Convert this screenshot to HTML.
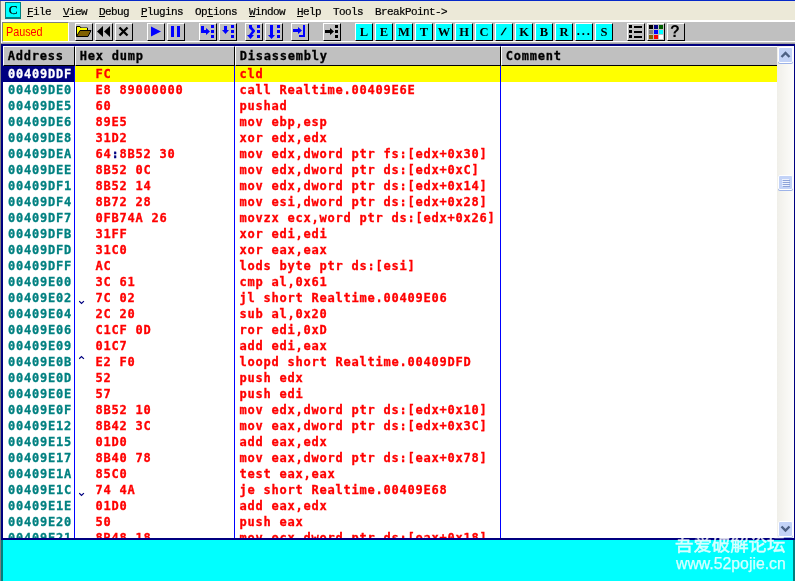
<!DOCTYPE html>
<html lang="en"><head><meta charset="utf-8"><title>OllyDbg</title>
<style>
html,body{margin:0;padding:0}
body{width:795px;height:581px;overflow:hidden;position:relative;background:#c0c0c0;font-family:"DejaVu Sans Mono","Liberation Mono",monospace}
body>*{position:absolute;will-change:transform}
#frameL{left:0;top:0;width:1px;height:581px;background:#808080;z-index:50}
#topline{left:0;top:0;width:795px;height:1px;background:#0628c8;z-index:51}
#menubar{left:1px;top:1px;width:794px;height:19px;background:#ece9d8}
#menubar .ic{-webkit-text-stroke:.25px #000;position:absolute;left:4px;top:1px;width:14px;height:14px;border:1px solid #008080;border-bottom-width:2px;background:#00ffff;font-family:"Liberation Serif",serif;font-size:13px;line-height:14px;text-align:center;color:#000}
#menubar .mi{position:absolute;top:4px;height:14px;font-family:"Liberation Mono",monospace;font-size:11px;line-height:14px;letter-spacing:-.6px;color:#000;white-space:pre;-webkit-text-stroke:.2px #000}
#menubar .mi u{text-decoration:none;position:relative}
#menubar .mi u::after{content:"";position:absolute;left:0;width:6px;top:10px;height:1px;background:#000}
#tbwhite{left:1px;top:20px;width:794px;height:2px;background:#fff}
#tbwl{left:1px;top:22px;width:1px;height:21px;background:#fff}
#tbbot{left:1px;top:41px;width:794px;height:1px;background:#fff}
#tbbot2{left:1px;top:43px;width:794px;height:1px;background:#a0a0a0}
#status{left:2px;top:22px;width:65px;height:18px;border-top:1px solid #808080;border-left:1px solid #808080;border-right:1px solid #fff;border-bottom:1px solid #fff;background:#ffff00;color:#ff0000;font-family:"Liberation Sans",sans-serif;font-size:12px;line-height:18px}
#status span{position:absolute;left:3px;top:0;transform:scaleX(.9);transform-origin:0 0}
.b{top:23px;width:16px;height:16px;border-top:1px solid #fff;border-left:1px solid #fff;border-right:1px solid #000;border-bottom:1px solid #000;background:#c0c0c0}
.b svg{position:absolute;left:0;top:0}
.b.c{background:#00ffff;font-family:"Liberation Serif",serif;font-weight:bold;font-size:12.5px;line-height:16px;text-align:center;color:#000}
.b .dots{position:relative;top:-1.5px;left:.2px;font-size:12.5px;letter-spacing:1.9px}
.b .sl{display:inline-block;font-family:"Liberation Sans",sans-serif;font-size:10px;position:relative;top:-.8px;left:-1px;transform:skewX(-22deg) scaleX(1.25)}
.b .q{position:absolute;left:-1px;top:0;width:16px;text-align:center;font-family:"Liberation Sans",sans-serif;font-weight:bold;font-size:16px;line-height:16px}
#cpu{left:1px;top:44px;width:794px;height:496px;background:#000080}
.hdr{top:46px;height:20px;background:#c0c0c0;border-top:1px solid #fff;border-left:1px solid #fff;border-bottom:1px solid #000;border-right:1px solid #000;box-sizing:border-box;font-size:12px;letter-spacing:.776px;font-weight:bold;line-height:16px;color:#000}
.hdr span{position:absolute;left:3.7px;top:1.4px;white-space:pre;-webkit-text-stroke:.3px #000}
.hdr.last{border-right:0}
#rows{left:3px;top:66px;width:774px;height:472px;background:#fff;overflow:hidden}
.row{position:absolute;left:0;width:774px;height:16px;font-size:12px;letter-spacing:.776px;font-weight:bold;line-height:16px;color:#ff0000;white-space:pre}
.row.sel{background:#ffff00}
.row span{position:absolute;top:0;-webkit-text-stroke:.3px currentColor}
.row .a{left:0;width:71px;color:#008080;padding-left:5px;box-sizing:border-box}
.row.sel .a{background:#000080;color:#fff}
.row .mk{position:absolute;left:76px;top:0}
.row .h{left:92.5px}
.row .h i{font-style:normal;color:#000080}
.row .d{left:236.5px}
.vl{top:66px;width:1px;height:472px;background:#0000ff}
#sb{left:777px;top:46px;width:16.5px;height:492px;background:linear-gradient(90deg,#f0efe9,#fdfdfb)}
#sb>*{position:absolute}
.sbb{left:1px;width:15px;height:16px;background:#c3d3f7;border-radius:2px;box-sizing:border-box;border:1px solid #fff;box-shadow:0 1px 0 #9db3e8}
.sbb svg{position:absolute;left:0;top:0}
#bottom{left:1px;top:540px;width:794px;height:41px;background:#00ffff}
#botL{left:1px;top:540px;width:2px;height:41px;background:#008080}
#botR{left:793px;top:540px;width:2px;height:41px;background:#008080}
#wm1{left:674.5px;top:533.5px;width:114px;height:22px;color:#fff;opacity:.85;-webkit-text-stroke:.5px #fff;font-family:"Liberation Sans","Noto Sans CJK SC",sans-serif;font-size:18.4px;line-height:22px;white-space:pre;z-index:60}
#wm2{left:675.5px;top:552.600px;width:114px;height:22px;color:#fff;opacity:.85;-webkit-text-stroke:.25px #fff;font-family:"Liberation Sans","Noto Sans CJK SC",sans-serif;font-size:15.8px;line-height:22px;white-space:pre;z-index:60}
</style></head>
<body>
<div id="frameL"></div><div id="topline"></div>
<div id="menubar"><div class="ic">C</div><div class="mi" style="left:26px"><u>F</u>ile</div><div class="mi" style="left:62px"><u>V</u>iew</div><div class="mi" style="left:98px"><u>D</u>ebug</div><div class="mi" style="left:140px"><u>P</u>lugins</div><div class="mi" style="left:194px">Op<u>t</u>ions</div><div class="mi" style="left:248px"><u>W</u>indow</div><div class="mi" style="left:296px"><u>H</u>elp</div><div class="mi" style="left:332px">Tools</div><div class="mi" style="left:374px">BreakPoint-&gt;</div></div>
<div id="tbwhite"></div><div id="tbwl"></div><div id="tbbot"></div><div id="tbbot2"></div>
<div id="status"><span>Paused</span></div>
<div class="b" style="left:75px"><svg width="16" height="16" viewBox="0 0 16 16"><path d="M0.5 12.5V2.500H4L5 4H11.500V7" fill="#ffff00" stroke="#000"/><path d="M1 4h10v3H1z" fill="#ffff00"/><path d="M1 3h3v2H1z" fill="#ffff00"/><path d="M4 6.500H15L12 12.500H0.500Z" fill="#806000" stroke="#000" stroke-linejoin="miter"/></svg></div>
<div class="b" style="left:95px"><svg width="16" height="16" viewBox="0 0 16 16"><path d="M7 2v11L1 7.500zM14 2v11L8 7.500z" fill="#000"/></svg></div>
<div class="b" style="left:115px"><svg width="16" height="16" viewBox="0 0 16 16"><path d="M3.500 3.500L11.500 11.500M11.500 3.500L3.500 11.500" stroke="#000" stroke-width="2.300" stroke-linecap="butt"/></svg></div>
<div class="b" style="left:147px"><svg width="16" height="16" viewBox="0 0 16 16"><path d="M3 2.500v10l10-5z" fill="#0000ff"/></svg></div>
<div class="b" style="left:167px"><svg width="16" height="16" viewBox="0 0 16 16"><rect x="3" y="2" width="3" height="11" fill="#0000ff"/><rect x="9" y="2" width="3" height="11" fill="#0000ff"/></svg></div>
<div class="b" style="left:199px"><svg width="16" height="16" viewBox="0 0 16 16"><path d="M1 2h3v4h2V4l4 3.500L6 11V9H1z" fill="#0000ff"/><rect x="11" y="1" width="3" height="3" fill="#0000ff"/><rect x="11" y="6" width="3" height="3" fill="#0000ff"/><rect x="11" y="11" width="3" height="3" fill="#0000ff"/></svg></div>
<div class="b" style="left:219px"><svg width="16" height="16" viewBox="0 0 16 16"><path d="M4 2h3v4h2L5.500 10 2 6h2z" fill="#0000ff"/><rect x="11" y="1" width="3" height="3" fill="#0000ff"/><rect x="11" y="6" width="3" height="3" fill="#0000ff"/><rect x="11" y="11" width="3" height="3" fill="#0000ff"/></svg></div>
<div class="b" style="left:245px"><svg width="16" height="16" viewBox="0 0 16 16"><path d="M3 1H6V3L9 6.500V7.500L6 11H8L4.500 15L1 11H3L6 7L3 4Z" fill="#0000ff"/><rect x="11" y="1" width="3" height="3" fill="#0000ff"/><rect x="11" y="6" width="3" height="3" fill="#0000ff"/><rect x="11" y="11" width="3" height="3" fill="#0000ff"/></svg></div>
<div class="b" style="left:265px"><svg width="16" height="16" viewBox="0 0 16 16"><path d="M4 1h3v10h2L5.500 15 2 11h2z" fill="#0000ff"/><rect x="11" y="1" width="3" height="3" fill="#0000ff"/><rect x="11" y="6" width="3" height="3" fill="#0000ff"/><rect x="11" y="11" width="3" height="3" fill="#0000ff"/></svg></div>
<div class="b" style="left:291px"><svg width="16" height="16" viewBox="0 0 16 16"><path d="M1 5h5V3l4 3.500L6 10V8H1z" fill="#0000ff"/><path d="M11 1h2v12H7v-2h4z" fill="#0000ff"/></svg></div>
<div class="b" style="left:323px"><svg width="16" height="16" viewBox="0 0 16 16"><path d="M1 6h5V4l4 3.500L6 11V9H1z" fill="#000"/><rect x="11" y="1" width="3" height="3" fill="#000"/><rect x="11" y="6" width="3" height="3" fill="#000"/><rect x="11" y="11" width="3" height="3" fill="#000"/></svg></div>
<div class="b c" style="left:355px">L</div>
<div class="b c" style="left:375px">E</div>
<div class="b c" style="left:395px">M</div>
<div class="b c" style="left:415px">T</div>
<div class="b c" style="left:435px">W</div>
<div class="b c" style="left:455px">H</div>
<div class="b c" style="left:475px">C</div>
<div class="b c" style="left:495px"><span class="sl">/</span></div>
<div class="b c" style="left:515px">K</div>
<div class="b c" style="left:535px">B</div>
<div class="b c" style="left:555px">R</div>
<div class="b c" style="left:575px"><span class="dots">...</span></div>
<div class="b c" style="left:595px">S</div>
<div class="b" style="left:627px"><svg width="16" height="16" viewBox="0 0 16 16"><rect x="1" y="1" width="3" height="3"/><rect x="6" y="2" width="8" height="2"/><rect x="1" y="6" width="3" height="3"/><rect x="6" y="7" width="8" height="2"/><rect x="1" y="11" width="3" height="3"/><rect x="6" y="12" width="8" height="2"/></svg></div>
<div class="b" style="left:647px"><svg width="16" height="16" viewBox="0 0 16 16"><rect x="1" y="1" width="4" height="4" fill="#000"/><rect x="6" y="1" width="4" height="4" fill="#000080"/><rect x="11" y="1" width="4" height="4" fill="#006000"/><rect x="1" y="6" width="4" height="4" fill="#808080"/><rect x="6" y="6" width="4" height="4" fill="#0000ff"/><rect x="11" y="6" width="4" height="4" fill="#00ffff"/><rect x="1" y="11" width="4" height="4" fill="#806000"/><rect x="6" y="11" width="4" height="4" fill="#ff0000"/><rect x="11" y="11" width="4" height="4" fill="#ffffff"/></svg></div>
<div class="b" style="left:667px"><span class="q">?</span></div>
<div id="cpu"></div>
<div class="hdr" style="left:3px;width:72px"><span>Address</span></div><div class="hdr" style="left:75px;width:160px"><span>Hex dump</span></div><div class="hdr" style="left:235px;width:266px"><span>Disassembly</span></div><div class="hdr last" style="left:501px;width:276px"><span>Comment</span></div>
<div id="rows">
<div class="row sel" style="top:0px"><span class="a">00409DDF</span><span class="h">FC</span><span class="d">cld</span></div>
<div class="row" style="top:16px"><span class="a">00409DE0</span><span class="h">E8 89000000</span><span class="d">call Realtime.00409E6E</span></div>
<div class="row" style="top:32px"><span class="a">00409DE5</span><span class="h">60</span><span class="d">pushad</span></div>
<div class="row" style="top:48px"><span class="a">00409DE6</span><span class="h">89E5</span><span class="d">mov ebp,esp</span></div>
<div class="row" style="top:64px"><span class="a">00409DE8</span><span class="h">31D2</span><span class="d">xor edx,edx</span></div>
<div class="row" style="top:80px"><span class="a">00409DEA</span><span class="h">64<i>:</i>8B52 30</span><span class="d">mov edx,dword ptr fs:[edx+0x30]</span></div>
<div class="row" style="top:96px"><span class="a">00409DEE</span><span class="h">8B52 0C</span><span class="d">mov edx,dword ptr ds:[edx+0xC]</span></div>
<div class="row" style="top:112px"><span class="a">00409DF1</span><span class="h">8B52 14</span><span class="d">mov edx,dword ptr ds:[edx+0x14]</span></div>
<div class="row" style="top:128px"><span class="a">00409DF4</span><span class="h">8B72 28</span><span class="d">mov esi,dword ptr ds:[edx+0x28]</span></div>
<div class="row" style="top:144px"><span class="a">00409DF7</span><span class="h">0FB74A 26</span><span class="d">movzx ecx,word ptr ds:[edx+0x26]</span></div>
<div class="row" style="top:160px"><span class="a">00409DFB</span><span class="h">31FF</span><span class="d">xor edi,edi</span></div>
<div class="row" style="top:176px"><span class="a">00409DFD</span><span class="h">31C0</span><span class="d">xor eax,eax</span></div>
<div class="row" style="top:192px"><span class="a">00409DFF</span><span class="h">AC</span><span class="d">lods byte ptr ds:[esi]</span></div>
<div class="row" style="top:208px"><span class="a">00409E00</span><span class="h">3C 61</span><span class="d">cmp al,0x61</span></div>
<div class="row" style="top:224px"><span class="a">00409E02</span><svg class="mk" width="8" height="16" viewBox="0 0 8 16"><path d="M0.500 11.500L2.500 13.500L4.500 11.500" fill="none" stroke="#000080" stroke-width="1.200" stroke-linecap="square"/></svg><span class="h">7C 02</span><span class="d">jl short Realtime.00409E06</span></div>
<div class="row" style="top:240px"><span class="a">00409E04</span><span class="h">2C 20</span><span class="d">sub al,0x20</span></div>
<div class="row" style="top:256px"><span class="a">00409E06</span><span class="h">C1CF 0D</span><span class="d">ror edi,0xD</span></div>
<div class="row" style="top:272px"><span class="a">00409E09</span><span class="h">01C7</span><span class="d">add edi,eax</span></div>
<div class="row" style="top:288px"><span class="a">00409E0B</span><svg class="mk" width="8" height="16" viewBox="0 0 8 16"><path d="M0.500 4.500L2.500 2.500L4.500 4.500" fill="none" stroke="#000080" stroke-width="1.200" stroke-linecap="square"/></svg><span class="h">E2 F0</span><span class="d">loopd short Realtime.00409DFD</span></div>
<div class="row" style="top:304px"><span class="a">00409E0D</span><span class="h">52</span><span class="d">push edx</span></div>
<div class="row" style="top:320px"><span class="a">00409E0E</span><span class="h">57</span><span class="d">push edi</span></div>
<div class="row" style="top:336px"><span class="a">00409E0F</span><span class="h">8B52 10</span><span class="d">mov edx,dword ptr ds:[edx+0x10]</span></div>
<div class="row" style="top:352px"><span class="a">00409E12</span><span class="h">8B42 3C</span><span class="d">mov eax,dword ptr ds:[edx+0x3C]</span></div>
<div class="row" style="top:368px"><span class="a">00409E15</span><span class="h">01D0</span><span class="d">add eax,edx</span></div>
<div class="row" style="top:384px"><span class="a">00409E17</span><span class="h">8B40 78</span><span class="d">mov eax,dword ptr ds:[eax+0x78]</span></div>
<div class="row" style="top:400px"><span class="a">00409E1A</span><span class="h">85C0</span><span class="d">test eax,eax</span></div>
<div class="row" style="top:416px"><span class="a">00409E1C</span><svg class="mk" width="8" height="16" viewBox="0 0 8 16"><path d="M0.500 11.500L2.500 13.500L4.500 11.500" fill="none" stroke="#000080" stroke-width="1.200" stroke-linecap="square"/></svg><span class="h">74 4A</span><span class="d">je short Realtime.00409E68</span></div>
<div class="row" style="top:432px"><span class="a">00409E1E</span><span class="h">01D0</span><span class="d">add eax,edx</span></div>
<div class="row" style="top:448px"><span class="a">00409E20</span><span class="h">50</span><span class="d">push eax</span></div>
<div class="row" style="top:464px"><span class="a">00409E21</span><span class="h">8B48 18</span><span class="d">mov ecx,dword ptr ds:[eax+0x18]</span></div>
</div>
<div class="vl" style="left:74px"></div><div class="vl" style="left:234px"></div><div class="vl" style="left:500px"></div>
<div id="sb"><div class="sbb" style="top:.5px"><svg width="13" height="14" viewBox="0 0 13 14"><path d="M2.500 9L6.500 5L10.500 9" fill="none" stroke="#4d6185" stroke-width="2.400"/></svg></div>
<div class="sbb" style="top:129.200px;height:15px"><svg width="13" height="13" viewBox="0 0 13 13"><path d="M3 3.500h7M3 5.500h7M3 7.500h7M3 9.500h7" stroke="#eef3fd" stroke-width="1"/><path d="M4 4.500h7M4 6.500h7M4 8.500h7M4 10.500h7" stroke="#8ea3d8" stroke-width="1"/></svg></div>
<div class="sbb" style="top:474.800px"><svg width="13" height="14" viewBox="0 0 13 14"><path d="M2.500 4.500L6.500 8.500L10.500 4.500" fill="none" stroke="#4d6185" stroke-width="2.400"/></svg></div></div>
<div id="bottom"></div><div id="botL"></div><div id="botR"></div>
<div id="wm1">吾爱破解论坛</div><div id="wm2">www.52pojie.cn</div>
</body></html>
